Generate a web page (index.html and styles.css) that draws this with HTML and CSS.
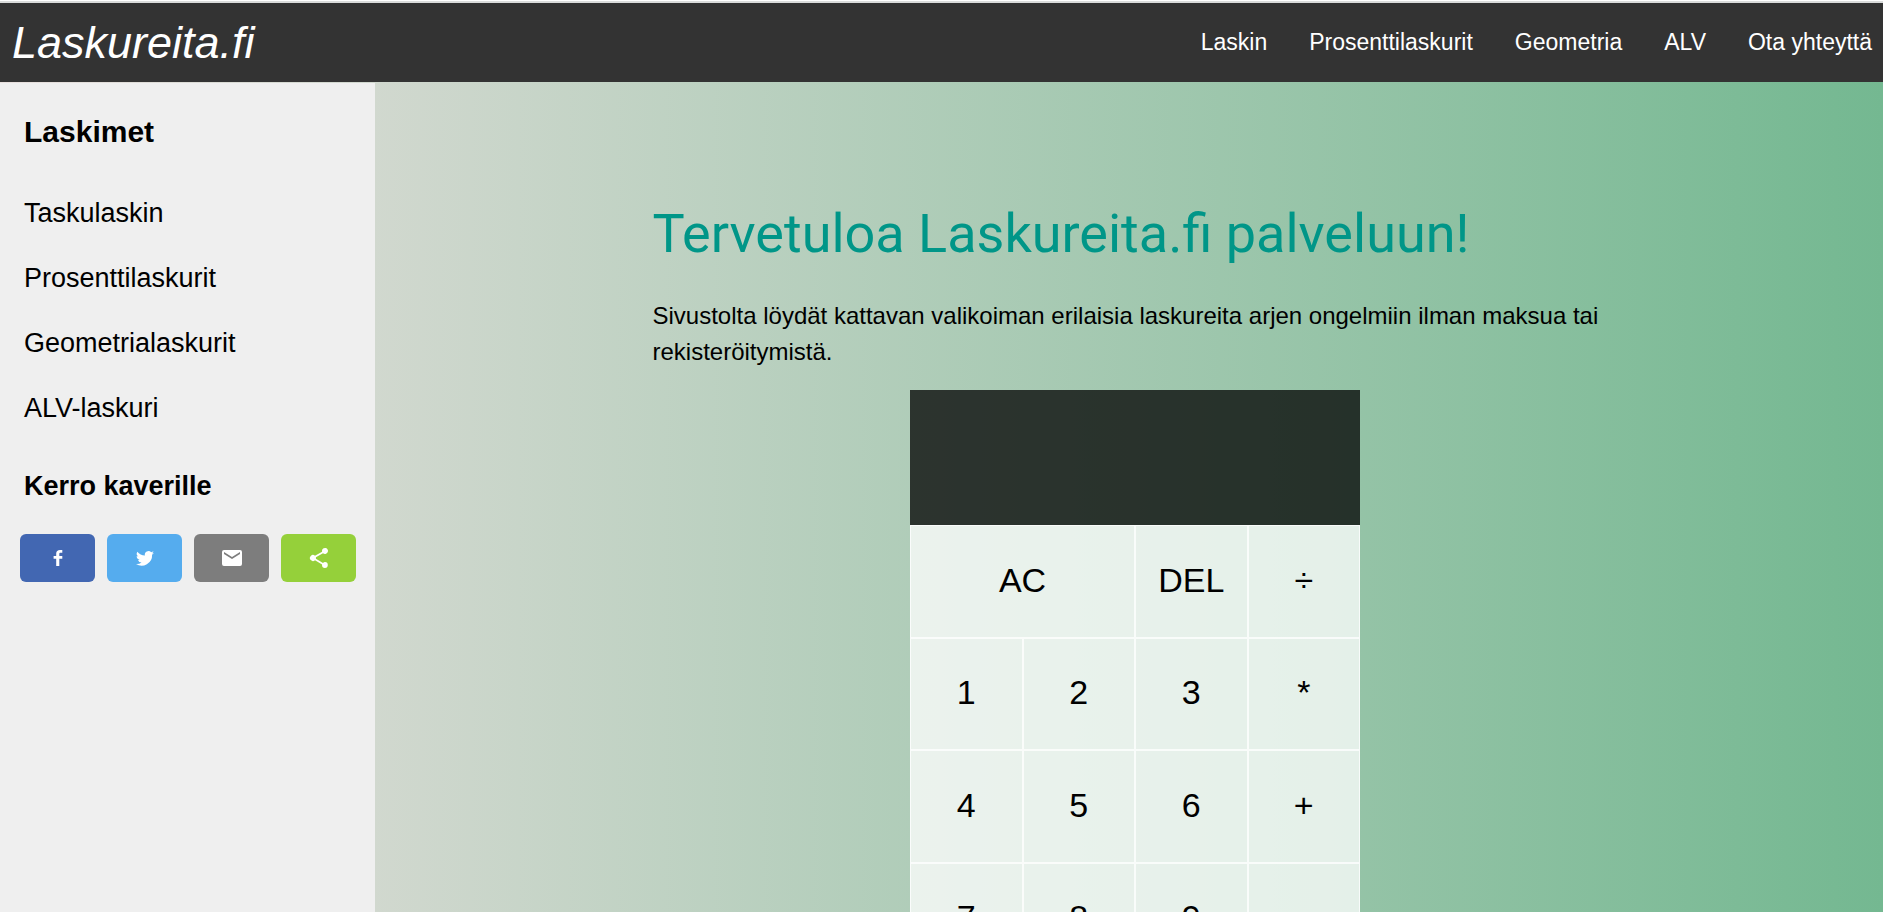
FILE: index.html
```html
<!DOCTYPE html>
<html lang="fi">
<head>
<meta charset="utf-8">
<title>Laskureita.fi</title>
<link rel="stylesheet" href="styles.css">
</head>
<body>
<header class="topbar">
  <a class="logo" href="#">Laskureita.fi</a>
  <nav class="topnav">
    <a href="#">Laskin</a>
    <a href="#">Prosenttilaskurit</a>
    <a href="#">Geometria</a>
    <a href="#">ALV</a>
    <a href="#">Ota yhteyttä</a>
  </nav>
</header>
<div class="layout">
  <aside class="sidebar">
    <h2 class="side-title">Laskimet</h2>
    <nav class="side-links">
      <a href="#">Taskulaskin</a>
      <a href="#">Prosenttilaskurit</a>
      <a href="#">Geometrialaskurit</a>
      <a href="#">ALV-laskuri</a>
    </nav>
    <h3 class="share-title">Kerro kaverille</h3>
    <div class="share">
      <button type="button" class="share-btn facebook" aria-label="Facebook">
        <svg viewBox="0 0 24 24"><path d="M10.200 20v-7.200H7.600V9.900h2.600V7.600C10.200 5.200 11.700 4 14 4h2.300v2.800h-1.500c-1.200 0-1.500.5-1.500 1.400v1.700h3v2.900h-3V20z"/></svg>
      </button>
      <button type="button" class="share-btn twitter" aria-label="Twitter">
        <svg viewBox="0 0 24 24"><path d="M21 5.700a7.400 7.400 0 0 1-2.100.6 3.700 3.700 0 0 0 1.600-2 7.400 7.400 0 0 1-2.300.9 3.700 3.700 0 0 0-6.300 3.400A10.500 10.500 0 0 1 4.300 4.700a3.700 3.700 0 0 0 1.100 4.900 3.700 3.700 0 0 1-1.700-.5 3.700 3.700 0 0 0 3 3.700 3.700 3.700 0 0 1-1.700.1 3.700 3.700 0 0 0 3.500 2.500A7.400 7.400 0 0 1 3 17a10.500 10.500 0 0 0 16.100-9.300A7.500 7.500 0 0 0 21 5.700z" transform="translate(0 1)"/></svg>
      </button>
      <button type="button" class="share-btn email" aria-label="Sähköposti">
        <svg viewBox="0 0 24 24"><path d="M20 4H4a2 2 0 0 0-2 2v12a2 2 0 0 0 2 2h16a2 2 0 0 0 2-2V6a2 2 0 0 0-2-2zm0 4-8 5-8-5V6l8 5 8-5z"/></svg>
      </button>
      <button type="button" class="share-btn more" aria-label="Jaa">
        <svg viewBox="0 0 24 24"><path d="M18 16.100c-.8 0-1.400.3-2 .8l-7.100-4.200a3.300 3.300 0 0 0 0-1.400L16 7.200a3 3 0 1 0-1-2.200c0 .2 0 .5.100.7L8 9.800a3 3 0 1 0 0 4.400l7.100 4.200-.1.600a2.900 2.900 0 1 0 3-2.900z"/></svg>
      </button>
    </div>
  </aside>
  <main class="main">
    <div class="content">
      <h1 class="heading">Tervetuloa Laskureita.fi palveluun!</h1>
      <p class="intro">Sivustolta löydät kattavan valikoiman erilaisia laskureita arjen ongelmiin ilman maksua tai rekisteröitymistä.</p>
      <div class="calculator">
        <output class="display"></output>
        <div class="keys">
          <button type="button" class="wide">AC</button>
          <button type="button">DEL</button>
          <button type="button">÷</button>
          <button type="button">1</button>
          <button type="button">2</button>
          <button type="button">3</button>
          <button type="button">*</button>
          <button type="button">4</button>
          <button type="button">5</button>
          <button type="button">6</button>
          <button type="button">+</button>
          <button type="button">7</button>
          <button type="button">8</button>
          <button type="button">9</button>
          <button type="button">-</button>
        </div>
      </div>
    </div>
  </main>
</div>
</body>
</html>
```
FILE: styles.css
```css
* {
  box-sizing: border-box;
}

html {
  height: 100%;
}

body {
  margin: 0;
  height: 100%;
  display: flex;
  flex-direction: column;
  overflow: hidden;
  background: #fff;
  color: #000;
  font-family: "Liberation Sans", Arial, sans-serif;
}

a {
  color: inherit;
  text-decoration: none;
}

h1,
h2,
h3,
p {
  margin: 0;
}

.topbar {
  flex: none;
  display: flex;
  align-items: center;
  justify-content: space-between;
  height: 81px;
  margin-top: 1px;
  padding: 0 11px 0 12px;
  border-top: 2px solid #dadcdb;
  background: #333;
  color: #fff;
}

.logo {
  font-size: 45px;
  font-style: italic;
}

.topnav {
  display: flex;
  gap: 42px;
  font-size: 23px;
}

.layout {
  flex: 1;
  min-height: 0;
  display: flex;
  background: linear-gradient(to right, #e8e0de, #74b891);
}

.sidebar {
  flex: none;
  width: 375px;
  margin-top: 1px;
  padding: 31px 19px 0 24px;
  background: #efefef;
}

.side-title {
  font-size: 30px;
  line-height: 36px;
}

.side-links {
  display: flex;
  flex-direction: column;
  gap: 28px;
  margin-top: 45px;
  font-size: 27px;
  line-height: 37px;
}

.share-title {
  margin-top: 41px;
  font-size: 27px;
  line-height: 36px;
}

.share {
  display: flex;
  gap: 12px;
  margin: 30px 0 0 -4px;
}

.share-btn {
  flex: none;
  display: flex;
  align-items: center;
  justify-content: center;
  width: 75px;
  height: 48px;
  padding: 0;
  border: 0;
  border-radius: 6px;
}

.share-btn svg {
  width: 24px;
  height: 24px;
  fill: #fff;
}

.facebook {
  background: #4267b2;
}

.twitter {
  background: #55acee;
}

.email {
  background: #7d7d7d;
}

.more {
  background: #95d03a;
}

.main {
  flex: 1;
  min-width: 0;
  padding: 119px 0 0 12px;
}

.content {
  max-width: 965px;
  margin: 0 auto;
}

.heading {
  color: #009688;
  font-family: Roboto, sans-serif;
  font-size: 54px;
  font-weight: 400;
  line-height: 66px;
}

.intro {
  margin-top: 31px;
  font-size: 24px;
  line-height: 36px;
}

.calculator {
  width: 450px;
  margin: 20px auto 0;
}

.display {
  display: block;
  height: 135px;
  background: rgba(0, 0, 0, 0.75);
}

.keys {
  display: grid;
  grid-template-columns: repeat(4, 1fr);
  grid-template-rows: repeat(4, 1fr);
  height: 450px;
}

.keys button {
  padding: 0 0 2px;
  border: 1px solid rgba(255, 255, 255, 0.75);
  background: rgba(255, 255, 255, 0.75);
  color: #000;
  font-family: inherit;
  font-size: 34px;
}

.keys .wide {
  grid-column: span 2;
}
```
